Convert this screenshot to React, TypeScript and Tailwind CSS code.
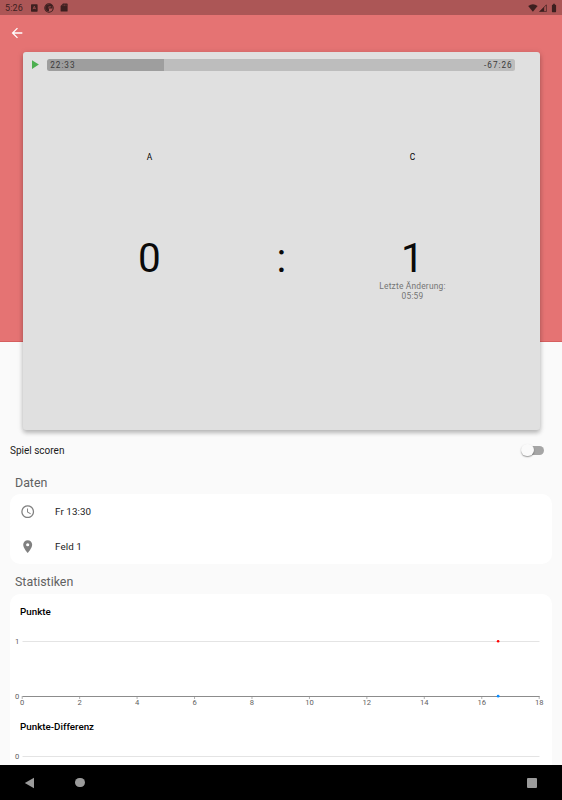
import {
  MdAccessTime,
  MdArrowBack,
  MdBatteryFull,
  MdLocationOn,
  MdPlayArrow,
} from "react-icons/md";

const TICKS = [0, 2, 4, 6, 8, 10, 12, 14, 16, 18];
const AXIS_START = 12.2;
const AXIS_WIDTH = 517;

const toX = (minute: number) => AXIS_START + (minute / 18) * AXIS_WIDTH;

function StatusBar() {
  return (
    <div className="flex h-[15px] shrink-0 items-center bg-[#ac5656] pl-[5px] pr-[3px] text-[#3c1f1f]">
      <span className="w-[25px] pt-px text-[9px] leading-none tracking-[0.15px]">5:26</span>
      <svg className="ml-px" width="7" height="8" viewBox="0 0 7 8">
        <rect width="6.6" height="7.4" y=".3" rx=".7" fill="currentColor" />
        <path d="M2 5.2 3.3 2.2 4.6 5.2M2.4 4.3h1.8" stroke="#ac5656" strokeWidth=".7" fill="none" />
      </svg>
      <svg className="ml-[6px]" width="10" height="10" viewBox="0 0 10 10">
        <circle cx="5" cy="5" r="4.2" fill="none" stroke="currentColor" strokeWidth="1.1" />
        <path d="M2.6 1.8Q1.2 3.2 1.2 5T3 8.2h2V5.6h3.4V2.4L6.4 1z" fill="currentColor" />
        <path d="M4.6 3.4h2.6v.8H5.2v1.4h-.6z" fill="#ac5656" />
      </svg>
      <svg className="ml-[6px]" width="8" height="9" viewBox="0 0 8 9">
        <path d="M3 .4h4q.6 0 .6.6v7q0 .6-.6.6H1.2q-.6 0-.6-.6V3z" fill="currentColor" />
        <path d="M3 1.5v1.6M4.5 1.5v1.6M6 1.5v1.6" stroke="#ac5656" strokeWidth=".4" />
      </svg>
      <div className="ml-auto flex items-center">
        <svg width="10" height="8" viewBox="0 0 10 8">
          <path d="M.2 1.9Q5-1.5 9.6 1.9L4.9 7.8z" fill="currentColor" />
        </svg>
        <svg className="ml-px" width="8" height="8" viewBox="0 0 8 8">
          <path d="M7.4.8v6.8H.6z" fill="none" stroke="currentColor" strokeWidth=".7" />
          <path d="M5.2 2.9v4.7H.6z" fill="currentColor" />
        </svg>
        <MdBatteryFull className="ml-[2px] size-[10px]" />
      </div>
    </div>
  );
}

function Progress() {
  return (
    <div className="flex items-center pl-[4.9px] pt-[5px]">
      <MdPlayArrow className="size-[15px] text-[#4caf50]" />
      <div className="ml-[4.8px] flex h-[12.5px] w-[467.5px] items-center justify-between rounded-[2.5px] bg-[linear-gradient(to_right,#9e9e9e_25%,#bdbdbd_25%)] px-[3px] text-[8.2px] leading-none tracking-[1px] text-[#3a3a3a]">
        <span>22:33</span>
        <span className="-mr-px">-67:26</span>
      </div>
    </div>
  );
}

function Team({ name, score, changed }: { name: string; score: number; changed?: string }) {
  return (
    <div className="flex w-[254px] flex-col items-center text-black">
      <div className="h-[81px] text-[8.4px] leading-[12px]">{name}</div>
      <div className="h-[49px] text-[40.5px] leading-[53px] text-[#0a0a0a]">{score}</div>
      {changed && (
        <div className="text-center text-[8.4px] leading-[10px] tracking-[0.2px] text-[#757575]">
          Letzte Änderung:
          <br />
          {changed}
        </div>
      )}
    </div>
  );
}

function ScoreCard() {
  return (
    <div className="mx-[22.5px] mt-[2.4px] h-[378px] shrink-0 rounded-[3px] bg-[#e0e0e0] shadow-[0_3px_4px_rgba(0,0,0,0.2),0_1px_6px_rgba(0,0,0,0.14)]">
      <Progress />
      <div className="mt-[79px] flex">
        <Team name="A" score={0} />
        <div className="w-[9px] pt-[81px] text-center text-[40.5px] leading-[53px] text-[#0a0a0a]">:</div>
        <Team name="C" score={1} changed="05:59" />
      </div>
    </div>
  );
}

function PointsChart() {
  return (
    <svg className="block" width="542" height="92" viewBox="0 0 542 92" fontSize="7.6" fill="#616161">
      <path d="M12.5 17.5h517" stroke="#e4e4e4" />
      <path d="M12.5 72.5h517" stroke="#8c8c8c" />
      <text x="9.3" y="20" textAnchor="end">1</text>
      <text x="9.3" y="75" textAnchor="end">0</text>
      {TICKS.map((t) => (
        <g key={t}>
          <path d={`M${toX(t)} 72v3`} stroke="#8c8c8c" strokeWidth=".7" />
          <text x={toX(t)} y="81" textAnchor="middle">
            {t}
          </text>
        </g>
      ))}
      <circle cx={toX(16.57)} cy="17.2" r="1.3" fill="#f00" />
      <circle cx={toX(16.57)} cy="72.2" r="1.4" fill="#0a8cff" />
    </svg>
  );
}

function DifferenceChart() {
  return (
    <svg className="block" width="542" height="40" viewBox="0 0 542 40" fontSize="7.6" fill="#616161">
      <path d="M12.5 17.5h517" stroke="#e4e4e4" />
      <text x="9.3" y="20" textAnchor="end">0</text>
    </svg>
  );
}

function NavigationBar() {
  return (
    <div className="flex h-[35px] shrink-0 items-center bg-black pl-[24px] pr-[25px] text-[#9b9b9b]">
      <svg width="11" height="12" viewBox="0 0 11 12">
        <path d="M10 .7v10.6L.8 6z" fill="currentColor" />
      </svg>
      <div className="ml-[40px] size-[9.5px] rounded-full bg-current" />
      <div className="ml-auto size-[10px] rounded-[1px] bg-current" />
    </div>
  );
}

export default function App() {
  return (
    <div className="flex h-[800px] w-[562px] flex-col overflow-hidden bg-[#fafafa] font-[Roboto,sans-serif]">
      <div className="relative flex h-[342px] shrink-0 flex-col border-b border-[#d65f5f] bg-[#e57373]">
        <StatusBar />
        <div className="flex h-[35px] shrink-0 items-center pl-[9.4px] text-white">
          <MdArrowBack className="size-4" />
        </div>
        <ScoreCard />
      </div>

      <div className="flex min-h-0 flex-1 flex-col overflow-hidden pt-[90px]">
        {/* Scoring switch */}
        <div className="flex h-[36px] shrink-0 items-center justify-between pl-[10px] pr-[18px] text-[10px] text-[#1a1a1a]">
          <span>Spiel scoren</span>
          <div className="flex h-[13px] w-[23px] items-center">
            <div className="z-10 size-[12.6px] shrink-0 rounded-full bg-[#fafafa] shadow-[0_1px_1.5px_rgba(0,0,0,0.4)]" />
            <div className="-ml-[10px] h-[9px] w-[20.4px] shrink-0 rounded-full bg-[#a5a5a5]" />
          </div>
        </div>

        {/* Match data */}
        <h2 className="flex h-[26px] shrink-0 items-end pb-[3px] pl-[15px] text-[12.4px] leading-[16px] text-[#616161]">
          Daten
        </h2>
        <div className="mx-[10px] h-[70px] shrink-0 rounded-[10px] bg-white text-[9.8px] tracking-[0.1px] text-[#1a1a1a]">
          <div className="flex h-[35px] items-center pl-[10px]">
            <MdAccessTime className="size-[15.4px] text-[#808080]" />
            <span className="ml-[19.6px] pt-[2px]">Fr 13:30</span>
          </div>
          <div className="flex h-[35px] items-center pl-[10px]">
            <MdLocationOn className="size-[15.4px] text-[#808080]" />
            <span className="ml-[19.6px] pt-[2px]">Feld 1</span>
          </div>
        </div>

        {/* Statistics */}
        <h2 className="flex h-[30px] shrink-0 items-end pb-[4px] pl-[15px] text-[12.4px] leading-[16px] text-[#616161]">
          Statistiken
        </h2>
        <div className="mx-[10px] h-[260px] shrink-0 rounded-t-[10px] bg-white text-black">
          <h3 className="h-[30px] pl-[10px] pt-[11px] text-[9.8px] font-medium leading-[14px]">Punkte</h3>
          <PointsChart />
          <h3 className="h-[23px] pl-[10px] pt-[4px] text-[9.8px] font-medium leading-[14px]">
            Punkte-Differenz
          </h3>
          <DifferenceChart />
        </div>
      </div>
      <NavigationBar />
    </div>
  );
}
